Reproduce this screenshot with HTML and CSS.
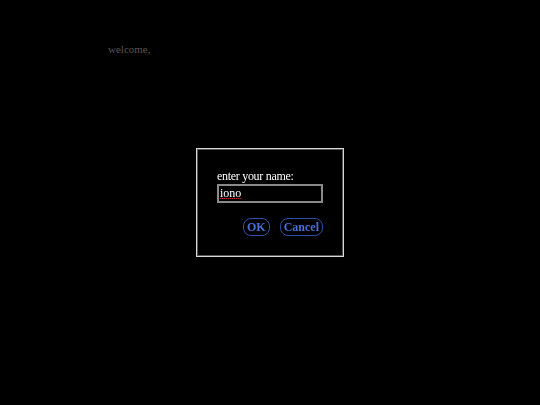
FILE: index.html
```html
<!DOCTYPE html>
<html>
<head>
<meta charset="utf-8">
<link rel="stylesheet" href="styles.css">
</head>
<body>
<p class="welcome">welcome,</p>
<div class="overlay">
  <div class="dialog">
    <label class="prompt">enter your name:</label>
    <div class="field"><span class="value">iono</span></div>
    <div class="actions">
      <button class="btn">OK</button>
      <button class="btn">Cancel</button>
    </div>
  </div>
</div>
</body>
</html>
```
FILE: styles.css
```css
html, body {
  margin: 0;
  background: #000;
  height: 100%;
}
body {
  font-family: "Liberation Serif", "Times New Roman", serif;
  color: #fff;
}
.welcome {
  margin: 0;
  padding: 43px 0 0 108px;
  font-size: 11px;
  color: #555;
}
.overlay {
  position: fixed;
  inset: 0;
  display: flex;
  align-items: center;
  justify-content: center;
}
.dialog {
  box-sizing: border-box;
  width: 148px;
  height: 109px;
  border: 1px solid #d8d8d8;
  box-shadow: inset 0 0 0 1px #555;
  padding: 20px 20px 0 20px;
  display: flex;
  flex-direction: column;
}
.prompt {
  font-size: 12px;
  line-height: 15px;
  letter-spacing: -0.3px;
  color: #fff;
}
.field {
  box-sizing: border-box;
  width: 106px;
  height: 19px;
  border: 2px solid #8a8a8a;
  padding: 0 1px;
  font-size: 12px;
  line-height: 15px;
}
.value {
  text-decoration: underline dotted #c22;
  text-decoration-thickness: 1px;
  text-underline-offset: 1px;
}
.actions {
  display: flex;
  justify-content: flex-end;
  gap: 10px;
  margin-top: 15px;
  width: 106px;
}
.btn {
  box-sizing: border-box;
  height: 18px;
  padding: 0 3px;
  background: #000;
  border: 1.5px solid #2d4fa8;
  border-radius: 8px;
  color: #4a6fd6;
  font-family: "Liberation Serif", "Times New Roman", serif;
  font-weight: bold;
  font-size: 12px;
  line-height: 14px;
}
```
